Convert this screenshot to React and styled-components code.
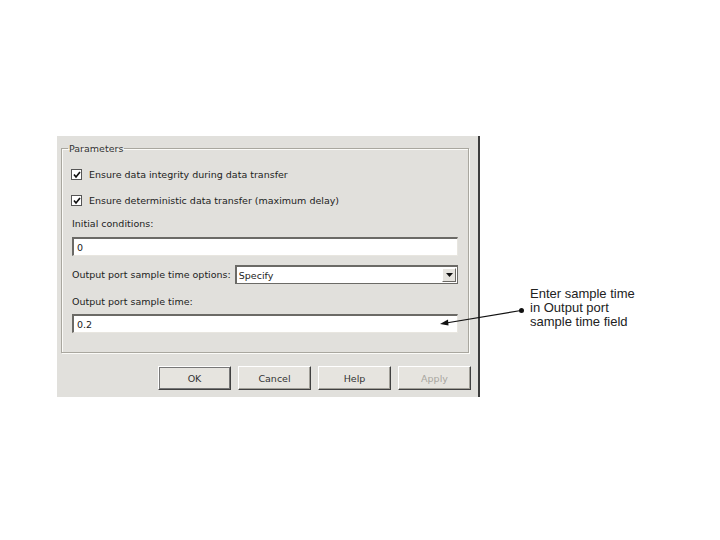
import React from 'react'
import styled, { createGlobalStyle } from 'styled-components'

const Global = createGlobalStyle`
  html, body { margin: 0; padding: 0; background: #fff; }
  body { font-family: "Liberation Sans", Arial, sans-serif; }
`

const Page = styled.div`
  position: relative;
  width: 720px;
  height: 540px;
  display: flex;
  align-items: flex-start;
  padding: 136px 0 0 57px;
  box-sizing: border-box;
`

const Dialog = styled.div`
  width: 421px;
  height: 261px;
  background: #e1e0dc;
  border-right: 2px solid #3c3c3c;
  box-sizing: content-box;
  display: flex;
  flex-direction: column;
  font-family: "DejaVu Sans", Tahoma, sans-serif;
  font-size: 9.5px;
  color: #222;
`

const Group = styled.fieldset`
  margin: 7px 9px 0 4px;
  padding: 6px 10px 19px 10px;
  border: 1px solid #a9a79f;
  box-shadow: inset 1px 1px 0 #fbfbf8, 1px 1px 0 #fbfbf8;
  display: flex;
  flex-direction: column;
  min-width: 0;
`

const Legend = styled.legend`
  padding: 0 1px;
  margin-left: -4px;
  color: #333;
`

const CheckRow = styled.label`
  display: flex;
  align-items: center;
  gap: 7px;
  height: 13px;
  margin: ${p => p.$top}px 0 0 -1px;
`

const Box = styled.span`
  width: 9px;
  height: 9px;
  background: #fff;
  border: 1px solid #555;
  display: flex;
  align-items: center;
  justify-content: center;
`

const Label = styled.div`
  margin-top: ${p => p.$top}px;
  height: 13px;
  line-height: 13px;
`

const Field = styled.div`
  margin-top: ${p => p.$top}px;
  height: 16px;
  background: #fff;
  border-top: 2px solid #6b6a66;
  border-left: 2px solid #6b6a66;
  border-right: 1px solid #e8e6e0;
  border-bottom: 1px solid #e8e6e0;
  display: flex;
  align-items: center;
  padding-left: 3px;
  box-sizing: content-box;
`

const SelectRow = styled.div`
  display: flex;
  align-items: center;
  margin-top: 9px;
  gap: 4px;
`

const Select = styled.div`
  flex: 1;
  height: 16px;
  background: #fff;
  border: 1px solid #6b6a66;
  border-width: 2px 1px 1px 2px;
  display: flex;
  align-items: center;
  padding-left: 2px;
  justify-content: space-between;
`

const DropBtn = styled.div`
  width: 14px;
  height: 14px;
  margin-right: 1px;
  background: #e6e4df;
  border: 1px solid #fff;
  border-right-color: #6a6863;
  border-bottom-color: #6a6863;
  display: flex;
  align-items: center;
  justify-content: center;
  box-sizing: border-box;
`

const Buttons = styled.div`
  display: flex;
  justify-content: flex-end;
  gap: 7px;
  margin: 13px 7px 0 0;
`

const Button = styled.div`
  width: 73px;
  height: 24px;
  box-sizing: border-box;
  display: flex;
  align-items: center;
  justify-content: center;
  background: #e6e4df;
  color: ${p => (p.$disabled ? '#a8a6a0' : '#333')};
  border: 1px solid;
  border-color: #fff #404040 #404040 #fff;
  box-shadow: ${p => (p.$default ? 'inset 0 0 0 1px #777' : 'inset -1px -1px 0 #a19f98')};
`

const Note = styled.div`
  margin: 151px 0 0 50px;
  font-family: "Liberation Sans", Arial, sans-serif;
  font-size: 13px;
  line-height: 14px;
  color: #222;
`

const Arrow = styled.svg`
  position: absolute;
  left: 0;
  top: 0;
  pointer-events: none;
`

const Check = () => (
  <svg width="8" height="8" viewBox="0 0 8 8">
    <path d="M1 3.5 L3 6 L7 1" stroke="#111" strokeWidth="1.7" fill="none" />
  </svg>
)

export default function App() {
  return (
    <>
      <Global />
      <Page>
        <Dialog>
          <Group>
            <Legend>Parameters</Legend>
            <CheckRow $top={8}>
              <Box><Check /></Box>
              Ensure data integrity during data transfer
            </CheckRow>
            <CheckRow $top={13}>
              <Box><Check /></Box>
              Ensure deterministic data transfer (maximum delay)
            </CheckRow>
            <Label $top={10}>Initial conditions:</Label>
            <Field $top={7}>0</Field>
            <SelectRow>
              <span>Output port sample time options:</span>
              <Select>
                Specify
                <DropBtn>
                  <svg width="7" height="4" viewBox="0 0 7 4"><path d="M0 0h7L3.5 4z" fill="#111" /></svg>
                </DropBtn>
              </Select>
            </SelectRow>
            <Label $top={11}>Output port sample time:</Label>
            <Field $top={6}>0.2</Field>
          </Group>
          <Buttons>
            <Button $default>OK</Button>
            <Button>Cancel</Button>
            <Button>Help</Button>
            <Button $disabled>Apply</Button>
          </Buttons>
        </Dialog>
        <Note>
          Enter sample time<br />
          in Output port<br />
          sample time field
        </Note>
        <Arrow width="720" height="540">
          <circle cx="521.5" cy="310.5" r="2.5" fill="#111" />
          <line x1="521" y1="310.5" x2="446" y2="323" stroke="#111" strokeWidth="1.2" />
          <path d="M440 324 L448 319.5 L448.5 325.5 Z" fill="#111" />
        </Arrow>
      </Page>
    </>
  )
}
